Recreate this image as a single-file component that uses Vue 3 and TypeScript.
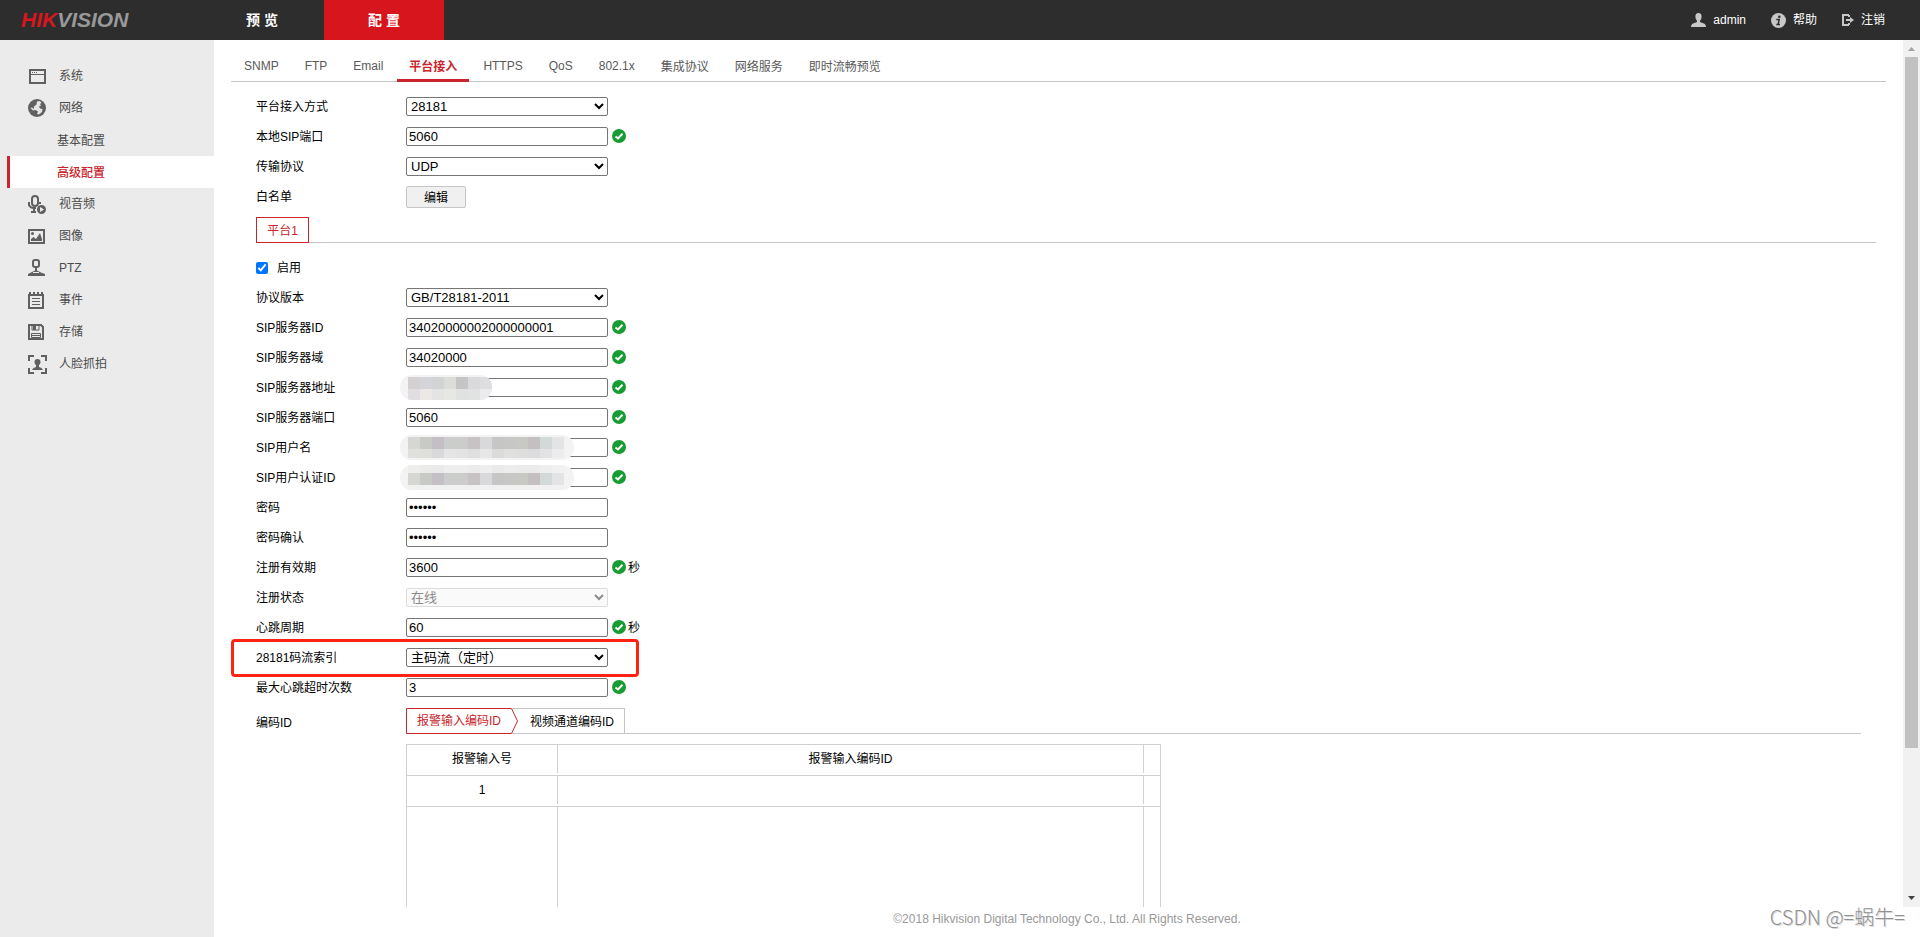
<script setup lang="ts">
import { ref } from 'vue'

interface Field {
  id: string
  label: string
  kind: 'select' | 'text' | 'password' | 'button'
  value: string
  valid?: boolean
  unit?: string
  disabled?: boolean
  highlight?: boolean
  mask?: 'short' | 'long' | 'tall'
}

const menu = [
  { label: '系统', icon: 'system' },
  { label: '网络', icon: 'network' },
  { label: '基本配置', sub: true },
  { label: '高级配置', sub: true, active: true },
  { label: '视音频', icon: 'av' },
  { label: '图像', icon: 'image' },
  { label: 'PTZ', icon: 'ptz' },
  { label: '事件', icon: 'event' },
  { label: '存储', icon: 'storage' },
  { label: '人脸抓拍', icon: 'face' },
]

const tabs = ['SNMP', 'FTP', 'Email', '平台接入', 'HTTPS', 'QoS', '802.1x', '集成协议', '网络服务', '即时流畅预览']
const activeTab = ref('平台接入')
const enabled = ref(true)

const general = ref<Field[]>([
  { id: 'mode', label: '平台接入方式', kind: 'select', value: '28181' },
  { id: 'local-port', label: '本地SIP端口', kind: 'text', value: '5060', valid: true },
  { id: 'transport', label: '传输协议', kind: 'select', value: 'UDP' },
  { id: 'whitelist', label: '白名单', kind: 'button', value: '编辑' },
])

const platform = ref<Field[]>([
  { id: 'version', label: '协议版本', kind: 'select', value: 'GB/T28181-2011' },
  { id: 'server-id', label: 'SIP服务器ID', kind: 'text', value: '34020000002000000001', valid: true },
  { id: 'server-domain', label: 'SIP服务器域', kind: 'text', value: '34020000', valid: true },
  { id: 'server-address', label: 'SIP服务器地址', kind: 'text', value: '', valid: true, mask: 'short' },
  { id: 'server-port', label: 'SIP服务器端口', kind: 'text', value: '5060', valid: true },
  { id: 'user-name', label: 'SIP用户名', kind: 'text', value: '', valid: true, mask: 'long' },
  { id: 'auth-id', label: 'SIP用户认证ID', kind: 'text', value: '', valid: true, mask: 'tall' },
  { id: 'password', label: '密码', kind: 'password', value: '123456' },
  { id: 'confirm', label: '密码确认', kind: 'password', value: '123456' },
  { id: 'validity', label: '注册有效期', kind: 'text', value: '3600', valid: true, unit: '秒' },
  { id: 'status', label: '注册状态', kind: 'select', value: '在线', disabled: true },
  { id: 'heartbeat', label: '心跳周期', kind: 'text', value: '60', valid: true, unit: '秒' },
  { id: 'stream', label: '28181码流索引', kind: 'select', value: '主码流（定时）', highlight: true },
  { id: 'timeouts', label: '最大心跳超时次数', kind: 'text', value: '3', valid: true },
])

const groups = [general, platform]

const longTop = ['#d6d7d2', '#c8cac6', '#c3bfc5', '#cbcccc', '#cccccb', '#c7c2c4', '#d9d9dc', '#c6c6c6', '#c7c8c5', '#c9c9c4', '#c4bfc0', '#d3d8d8', '#e4e4e7']
const longLow = ['#e0e0de', '#dfdfdc', '#d9d9dc', '#e5e5e5', '#e3e3e4', '#dfdfdf', '#e7e7e7', '#dbdbdb', '#e0e0de', '#dedede', '#dcdbdd', '#e3e3e4', '#ececee']
const masks = {
  short: {
    width: 92,
    rows: [
      { y: 2, h: 12, colors: ['#d5d1d3', '#d4d5d8', '#d1d3d4', '#dcddd8', '#c5c4c7', '#dad9dc', '#dedee1'] },
      { y: 14, h: 12, colors: ['#e0dee1', '#ebe8e6', '#e4e4e4', '#e7e7e4', '#e0e1e2', '#e0e3e2', '#ebebed'] },
    ],
  },
  long: {
    width: 174,
    rows: [
      { y: 2, h: 12, colors: longTop },
      { y: 14, h: 9, colors: longLow },
    ],
  },
  tall: {
    width: 174,
    rows: [
      { y: 0, h: 8, colors: ['#eeeeec', '#ebebea', '#eaeaea', '#eeeeee', '#eeeeee', '#ebebeb', '#eeeeee', '#eaeaea', '#ededed', '#ebebeb', '#ebebeb', '#eeeeee', '#f1f1f1'] },
      { y: 8, h: 12, colors: longTop },
      { y: 20, h: 5, colors: Array(13).fill('#f1f1f1') as string[] },
    ],
  },
}
</script>

<template>
  <div class="page">
    <header class="topbar">
      <div class="brand"><span class="brand-red">HIK</span>VISION</div>
      <nav class="main-nav">
        <a href="#preview">预 览</a>
        <a href="#config" class="current">配 置</a>
      </nav>
      <div class="account">
        <a href="#user">
          <svg width="15" height="14" viewBox="0 0 15 14" fill="#c8c8c8"><path d="M7.500 0C5.300 0 4.300 1.600 4.400 3.700 4.500 5.500 5.200 7 6 7.700V9L1.500 10.700Q0 11.400 0 14H15Q15 11.400 13.500 10.700L9 9V7.700C9.800 7 10.500 5.500 10.600 3.700 10.700 1.600 9.700 0 7.500 0Z" /></svg>
          <span>admin</span>
        </a>
        <a href="#help">
          <svg width="15" height="15" viewBox="0 0 15 15"><circle cx="7.500" cy="7.500" r="7.500" fill="#c8c8c8" /><circle cx="8.300" cy="3.700" r="1.300" fill="#2d2d2d" /><path d="M5.300 6.600H8.200L7.100 11.400M5.300 11.400H9" fill="none" stroke="#2d2d2d" stroke-width="1.500" /></svg>
          <span>帮助</span>
        </a>
        <a href="#logout">
          <svg width="12" height="12" viewBox="0 0 12 12"><path d="M7 1H1V11H7M7 1V3M7 11V9" fill="none" stroke="#c8c8c8" stroke-width="2" /><path d="M4 5H8V3L12 6 8 9V7H4Z" fill="#c8c8c8" /></svg>
          <span>注销</span>
        </a>
      </div>
    </header>

    <div class="body">
      <nav class="sidebar">
        <a v-for="item in menu" :key="item.label" href="#menu" class="menu-item" :class="{ sub: item.sub, active: item.active }">
          <span v-if="!item.sub" class="menu-icon">
            <svg width="20" height="20" viewBox="0 0 20 20" fill="none" stroke="#606060" stroke-width="2">
              <template v-if="item.icon === 'system'">
                <path d="M2 4H17V17H2Z" /><path d="M2 8.500H17" stroke-width="1" /><path d="M4 6.500H9" stroke-width="1" stroke-dasharray="1 1" />
              </template>
              <template v-else-if="item.icon === 'network'">
                <circle cx="9" cy="10" r="9" fill="#606060" stroke="none" />
                <path d="M9 3.500 12 3 13.500 5 12 6 13 7.500 11 8.500 12 10.500 14.500 11 14 14 11 16.500 9 16 10 13.500 7.500 12 5 12.500 2.500 10 4 9.500 6 11 6 8.500 8.500 6.500Z" fill="#e4e4e4" stroke="none" />
              </template>
              <template v-else-if="item.icon === 'av'">
                <rect x="4" y="2" width="6" height="10" rx="3" /><path d="M1 8V11Q2 14 6 14H8M12 8V10M6 14V17M3 18H8" />
                <circle cx="13.500" cy="15.500" r="4.500" fill="#606060" stroke="none" /><path d="M12 13 16 15.500 12 18Z" fill="#ebebeb" stroke="none" />
              </template>
              <template v-else-if="item.icon === 'image'">
                <path d="M1 4H16V17H1Z" /><circle cx="4.500" cy="7.500" r="1.500" fill="#606060" stroke="none" /><path d="M3 15V13L5.500 11 8 13 12 7 14 13V15Z" fill="#606060" stroke="none" />
              </template>
              <template v-else-if="item.icon === 'ptz'">
                <rect x="5" y="2" width="6" height="7" rx="2" /><path d="M8 9V13" stroke-width="2" /><path d="M0 18V16L3 14.500 7 12.500H9L13 14.500 17 16V18Z" fill="#606060" stroke="none" /><path d="M5 14.500H11" stroke="#ebebeb" stroke-width="1" />
              </template>
              <template v-else-if="item.icon === 'event'">
                <path d="M1 5H15V18H1Z" /><path d="M2 2V5M6 2V5M10 2V5M14 2V5" /><path d="M4 8.500H12M4 11.500H12M4 14.500H12" stroke-width="1" />
              </template>
              <template v-else-if="item.icon === 'storage'">
                <path d="M1 3H13L15 5V17H1Z" /><path d="M4 3V8H11V3" stroke-width="1" /><path d="M5 3H8V8H5Z" fill="#606060" stroke="none" /><path d="M3.500 11.500H12.500V15.500H3.500ZM4 13.500H12" stroke-width="1" />
              </template>
              <template v-else>
                <path d="M1 7V2H6M13 2H18V7M18 14V19H13M6 19H1V14" /><path d="M9.500 5C7.500 5 6.500 6.300 6.500 8 6.500 9.500 7.300 10.500 8 11V13Q5 13.500 4 16H15Q14 13.500 11 13V11C11.700 10.500 12.500 9.500 12.500 8 12.500 6.300 11.500 5 9.500 5Z" fill="#606060" stroke="none" />
              </template>
            </svg>
          </span>
          <span>{{ item.label }}</span>
        </a>
      </nav>

      <div class="content">
        <div class="viewport">
          <main class="panel">
            <nav class="tabs">
              <button v-for="tab in tabs" :key="tab" type="button" :class="{ active: tab === activeTab }" @click="activeTab = tab">{{ tab }}</button>
            </nav>

            <form class="form" @submit.prevent>
              <template v-for="(group, index) in groups" :key="index">
                <template v-if="index === 1">
                  <div class="platform-bar"><button type="button" class="platform-tab">平台1</button></div>
                  <div class="enable-row">
                    <input id="enable" v-model="enabled" type="checkbox" />
                    <label for="enable">启用</label>
                  </div>
                </template>
                <div v-for="field in group.value" :key="field.id" class="row">
                  <label :for="field.id">{{ field.label }}</label>
                  <div class="control">
                    <select v-if="field.kind === 'select'" :id="field.id" v-model="field.value" :disabled="field.disabled">
                      <option>{{ field.value }}</option>
                    </select>
                    <button v-else-if="field.kind === 'button'" :id="field.id" type="button" class="edit">{{ field.value }}</button>
                    <input v-else :id="field.id" v-model="field.value" :type="field.kind" autocomplete="off" />
                    <svg v-if="field.mask" class="mask" :width="masks[field.mask].width" height="25">
                      <defs>
                        <clipPath :id="field.id + '-clip'"><rect :width="masks[field.mask].width" height="25" rx="12" /></clipPath>
                      </defs>
                      <g :clip-path="`url(#${field.id}-clip)`">
                        <rect :width="masks[field.mask].width" height="25" fill="#f3f3f3" />
                        <template v-for="(line, l) in masks[field.mask].rows" :key="l">
                          <rect v-for="(color, c) in line.colors" :key="c" :x="8 + c * 12" :y="line.y" width="12" :height="line.h" :fill="color" />
                        </template>
                      </g>
                    </svg>
                    <svg v-if="field.valid" class="ok" width="14" height="15" viewBox="0 0 14 15"><circle cx="7" cy="7" r="7" fill="#179c33" /><path d="M3.500 7.500 6 9.500 10.500 4.800" fill="none" stroke="#fff" stroke-width="2" /></svg>
                    <span v-if="field.unit" class="unit">{{ field.unit }}</span>
                  </div>
                  <span v-if="field.highlight" class="highlight"></span>
                </div>
              </template>

              <div class="row code-row">
                <span class="code-label">编码ID</span>
                <div class="codes">
                  <div class="code-tabs">
                    <button type="button" class="code-tab selected">
                      <svg width="112" height="26" viewBox="0 0 112 26"><path d="M.5.5H105.500L111.500 13 105.500 25.500H.5Z" fill="#fff" stroke="#c9252d" /></svg>
                      <span>报警输入编码ID</span>
                    </button>
                    <button type="button" class="code-tab">视频通道编码ID</button>
                  </div>
                  <table>
                    <colgroup><col class="col-no" /><col class="col-code" /><col /></colgroup>
                    <thead>
                      <tr><th><div>报警输入号</div></th><th><div>报警输入编码ID</div></th><th><div></div></th></tr>
                    </thead>
                    <tbody>
                      <tr><td><div>1</div></td><td><div></div></td><td><div></div></td></tr>
                      <tr class="blank"><td><div></div></td><td><div></div></td><td><div></div></td></tr>
                    </tbody>
                  </table>
                </div>
              </div>
            </form>
          </main>
          <div class="scrollbar" aria-hidden="true">
            <svg width="17" height="17"><path d="M5 11H12L8.500 7Z" fill="#a3a3a3" /></svg>
            <div class="track"><div class="thumb"></div></div>
            <svg width="17" height="17"><path d="M5 6H12L8.500 10Z" fill="#404040" /></svg>
          </div>
        </div>
        <footer>©2018 Hikvision Digital Technology Co., Ltd. All Rights Reserved.</footer>
      </div>
    </div>
    <div class="watermark">CSDN @=蜗牛=</div>
  </div>
</template>

<style>
body {
  margin: 0;
}
</style>

<style scoped>
.page,
.page * {
  box-sizing: border-box;
}
.page {
  position: relative;
  display: flex;
  flex-direction: column;
  height: 100vh;
  overflow: hidden;
  background: #fff;
  color: #000;
  font: 12px/16px "Liberation Sans", "Noto Sans CJK SC", sans-serif;
}
a {
  color: inherit;
  text-decoration: none;
}
button,
input,
select {
  margin: 0;
  font-family: inherit;
}
svg {
  display: block;
  flex: none;
}
.topbar {
  display: flex;
  flex: none;
  height: 40px;
  background: #2d2d2d;
  color: #fff;
}
.brand {
  width: 204px;
  padding-left: 21px;
  color: #999;
  font-size: 21px;
  font-style: italic;
  font-weight: 700;
  line-height: 40px;
}
.brand-red {
  color: #d7171f;
}
.main-nav {
  display: flex;
}
.main-nav a {
  width: 120px;
  padding-right: 4px;
  font-size: 14px;
  font-weight: 700;
  line-height: 40px;
  text-align: center;
}
.main-nav .current {
  padding-right: 0;
  background: #d7151d;
}
.account {
  display: flex;
  gap: 25px;
  margin-left: auto;
  padding-right: 35px;
}
.account a {
  display: flex;
  align-items: center;
  gap: 7px;
}
.body {
  display: flex;
  flex: 1;
  min-height: 0;
}
.sidebar {
  flex: none;
  width: 214px;
  padding-top: 20px;
  background: #ebebeb;
  color: #4c4c4c;
}
.menu-item {
  display: flex;
  align-items: center;
  height: 32px;
  padding-left: 28px;
}
.menu-icon {
  width: 31px;
}
.menu-item.sub {
  margin-left: 7px;
  padding-top: 2px;
  padding-left: 50px;
}
.menu-item.active {
  padding-left: 47px;
  border-left: 3px solid #c9252d;
  background: #fff;
  color: #c9252d;
  font-weight: 500;
}
.content {
  display: flex;
  flex: 1;
  flex-direction: column;
  min-width: 0;
}
.viewport {
  display: flex;
  flex: 1;
  min-height: 0;
}
.panel {
  flex: 1;
  min-width: 0;
  padding: 0 17px;
  overflow: hidden;
}
.tabs {
  display: flex;
  gap: 2px;
  height: 42px;
  padding: 10px 1px 0;
  border-bottom: 1px solid #c6c6c6;
}
.tabs button {
  height: 32px;
  padding: 2px 12px 0;
  border: 0;
  border-bottom: 3px solid transparent;
  background: none;
  color: #595959;
  font-size: 12px;
  white-space: nowrap;
}
.tabs .active {
  border-color: #c9252d;
  color: #c9252d;
  font-weight: 700;
}
.form {
  padding: 10px 10px 0 25px;
}
.row {
  position: relative;
  display: grid;
  grid-template-columns: 150px 1fr;
  align-items: start;
  height: 30px;
  line-height: 30px;
}
.control {
  position: relative;
  display: flex;
  align-items: center;
  height: 29px;
}
.control input,
.control select {
  width: 202px;
  height: 19px;
  border: 1px solid #767676;
  border-radius: 2px;
  background: #fff;
  color: #000;
  font-size: 13px;
}
.control input {
  padding: 0 2px;
}
.control select {
  padding: 0;
}
.control select:disabled {
  border-color: #dcdcdc;
  background: #fafafa;
  color: #8c8c8c;
  opacity: 1;
}
.ok {
  margin-left: 4px;
}
.unit {
  margin-left: 2px;
}
.edit {
  width: 60px;
  height: 22px;
  padding: 0;
  border: 1px solid #c6c6c6;
  border-radius: 2px;
  background: #f0f0f0;
  color: #000;
  font-size: 12px;
}
.mask {
  position: absolute;
  top: 2px;
  left: -6px;
}
.highlight {
  position: absolute;
  top: -4px;
  left: -25px;
  width: 408px;
  height: 38px;
  border: 3px solid #ff2314;
  border-radius: 4px;
  pointer-events: none;
}
.platform-bar {
  display: flex;
  margin-top: 5px;
  background: linear-gradient(#c6c6c6, #c6c6c6) bottom / 100% 1px no-repeat;
}
.platform-tab {
  width: 53px;
  height: 26px;
  padding: 0 0 2px;
  border: 1px solid #c9252d;
  background: #fff;
  color: #c9252d;
  font-size: 12px;
}
.enable-row {
  display: flex;
  align-items: center;
  gap: 9px;
  height: 30px;
  margin-top: 10px;
}
.enable-row input {
  width: 12px;
  height: 12px;
  accent-color: #0075ff;
}
.code-row {
  height: auto;
  margin-top: 5px;
}
.code-tabs {
  display: flex;
  margin-right: 15px;
  background: linear-gradient(#c6c6c6, #c6c6c6) bottom / 100% 1px no-repeat;
}
.code-tab {
  width: 113px;
  height: 26px;
  padding: 0 0 2px 8px;
  border: 1px solid #c6c6c6;
  border-left: 0;
  background: none;
  color: #000;
  font-size: 12px;
  white-space: nowrap;
}
.code-tab.selected {
  z-index: 1;
  display: grid;
  width: 112px;
  margin-right: -6px;
  padding: 0;
  border: 0;
  color: #c9252d;
}
.code-tab.selected svg,
.code-tab.selected span {
  grid-area: 1 / 1;
}
.code-tab.selected span {
  padding-right: 6px;
  line-height: 26px;
}
table {
  width: 755px;
  margin-top: 10px;
  border: 1px solid #d0d0d0;
  border-spacing: 0;
  table-layout: fixed;
}
.col-no {
  width: 151px;
}
.col-code {
  width: 586px;
}
th,
td {
  height: 31px;
  padding: 0 0 2px;
  border-bottom: 1px solid #d0d0d0;
  font-weight: 400;
  text-align: center;
}
th div,
td div {
  height: 28px;
  border-right: 1px solid #d0d0d0;
  line-height: 28px;
}
th:last-child div,
td:last-child div {
  border-right: 0;
}
.blank div {
  height: 220px;
}
.scrollbar {
  display: flex;
  flex: none;
  flex-direction: column;
  width: 17px;
  background: #f1f1f1;
}
.track {
  flex: 1;
  padding: 0 2px;
}
.thumb {
  height: 83%;
  background: #c1c1c1;
}
footer {
  flex: none;
  height: 30px;
  color: #999;
  line-height: 24px;
  text-align: center;
}
.watermark {
  position: absolute;
  right: 15px;
  bottom: 6px;
  color: #909090;
  font: 300 20px/28px "Noto Sans CJK SC", sans-serif;
  text-shadow: 1px 1px 0 #d8d8d8;
}
</style>
